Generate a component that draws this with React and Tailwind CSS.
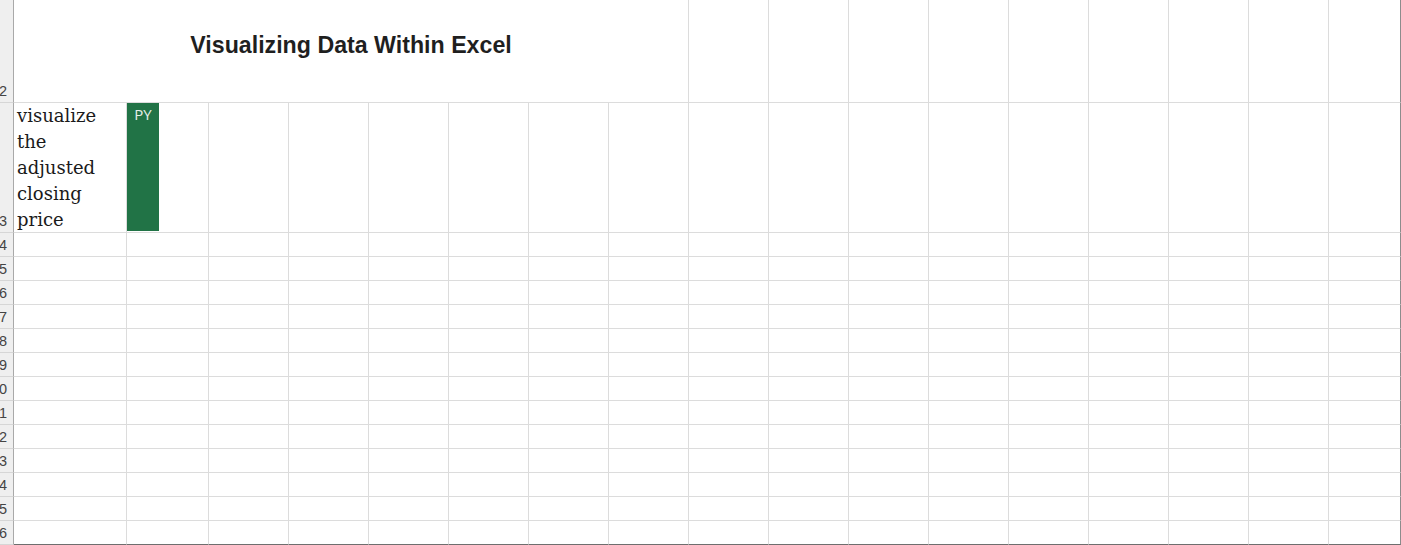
import React from 'react';

// column widths incl. the 1px right gridline (C..P are 80px each)
const colWidths = [113, 82, ...Array(14).fill(80), 72];

const RowHeader = ({ n, h }) => (
    <div
        className="flex justify-end items-end overflow-hidden bg-[#efefef] border-r border-r-[#a9a9a9] border-b border-b-[#d6d6d6] shrink-0 w-[14px] pr-[6px] pb-[3px]"
        style={{ height: h }}
    >
        <span className="whitespace-nowrap text-[14.5px] leading-[16px] text-[#444444] font-['Liberation_Sans',Arial,sans-serif]">{n}</span>
    </div>
);

const Cell = ({ w, last, lastRow, children, className = '' }) => (
    <div
        className={`shrink-0 h-full border-b ${lastRow ? 'border-b-[#6e6e6e]' : 'border-b-[#dcdcdc]'} border-r ${last ? 'border-r-[#8c8c8c]' : 'border-r-[#dcdcdc]'} ${className}`}
        style={{ width: w }}
    >
        {children}
    </div>
);

export default function App() {
    const smallRows = Array.from({ length: 13 }, (_, i) => i + 4);

    return (
        <div className="w-[1401px] h-[545px] bg-white overflow-hidden flex flex-col">
            {/* row 2: merged title across A:H */}
            <div className="flex h-[103px]">
                <RowHeader n={2} h={103} />
                <Cell w={675}>
                    <div className="text-center pt-[31px] text-[23.2px] leading-[28px] font-bold text-[#1f1f1f] font-['Liberation_Sans',Arial,sans-serif]">
                        Visualizing Data Within Excel
                    </div>
                </Cell>
                {colWidths.slice(8).map((w, i) => (
                    <Cell key={i} w={w} last={i === colWidths.length - 9} />
                ))}
            </div>

            {/* row 3: prompt + python cell */}
            <div className="flex h-[130px]">
                <RowHeader n={3} h={130} />
                <Cell w={colWidths[0]}>
                    <div className="pl-[3px] text-[18px] leading-[26px] text-[#1a1a1a] font-['DejaVu_Serif',Georgia,serif]">
                        visualize<br />the<br />adjusted<br />closing<br />price
                    </div>
                </Cell>
                <Cell w={colWidths[1]}>
                    <div className="w-[32px] h-[128px] bg-[#217346] flex justify-center pt-[3px]">
                        <span className="text-[15px] leading-[17px] text-[#e6efe9] font-['Open_Sans',Arial,sans-serif]">PY</span>
                    </div>
                </Cell>
                {colWidths.slice(2).map((w, i) => (
                    <Cell key={i} w={w} last={i === colWidths.length - 3} />
                ))}
            </div>

            {/* rows 4-16 */}
            {smallRows.map((n) => (
                <div key={n} className="flex h-[24px]">
                    <RowHeader n={n} h={24} />
                    {colWidths.map((w, i) => (
                        <Cell key={i} w={w} last={i === colWidths.length - 1} lastRow={n === 16} />
                    ))}
                </div>
            ))}
        </div>
    );
}
